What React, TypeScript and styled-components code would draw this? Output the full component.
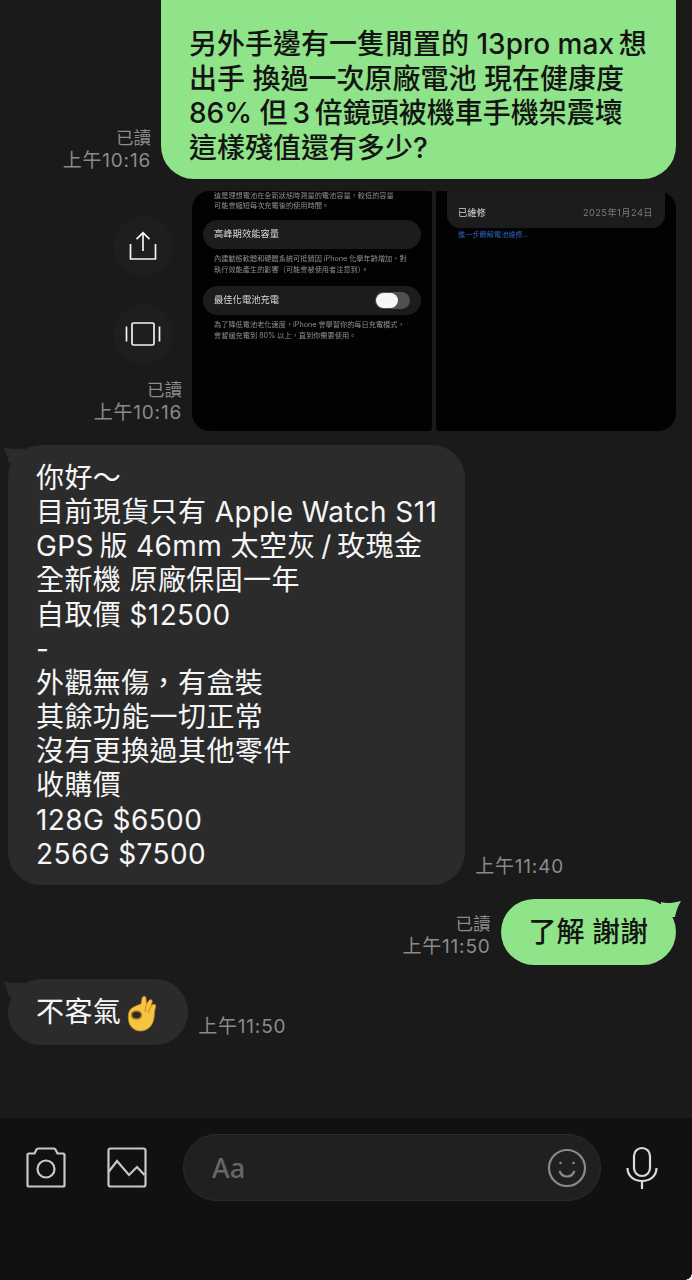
import React from "react";
import styled, { createGlobalStyle } from "styled-components";

const GlobalStyle = createGlobalStyle`
  html, body {
    margin: 0;
    padding: 0;
    background: #1a1a1a;
  }
  * {
    box-sizing: border-box;
  }
`;

const Page = styled.div`
  position: relative;
  width: 692px;
  height: 1280px;
  display: flex;
  flex-direction: column;
  overflow: hidden;
  background: #1a1a1a;
  font-family: Inter, "Noto Sans CJK TC", sans-serif;
`;

const Thread = styled.main`
  flex: 1;
  display: flex;
  flex-direction: column;
  padding: 0 16px 0 8px;
`;

const Row = styled.div<{ $mine?: boolean; $gap: number }>`
  display: flex;
  align-items: flex-end;
  justify-content: ${(p) => (p.$mine ? "flex-end" : "flex-start")};
  margin-bottom: ${(p) => p.$gap}px;
`;

const Bubble = styled.div<{ $mine?: boolean }>`
  position: relative;
  padding: 16px 28px;
  border-radius: 33px;
  background: ${(p) => (p.$mine ? "#8fe388" : "#2b2b2b")};
  color: ${(p) => (p.$mine ? "#141414" : "#f6f6f6")};
  font-size: 28px;
  font-weight: ${(p) => (p.$mine ? 500 : 400)};
  letter-spacing: ${(p) => (p.$mine ? "0" : "0.4px")};
  line-height: 34px;
  white-space: pre-line;
`;

const TopBubble = styled(Bubble)`
  width: 515px;
  height: 179px;
  padding-top: 27px;
  line-height: 34.5px;
  border-radius: 0 0 33px 33px;
`;

const LongBubble = styled(Bubble)`
  padding: 16px 28px 14px;
  line-height: 34.16px;
`;

const Tail = styled.svg<{ $mine?: boolean }>`
  position: absolute;
  top: 0;
  width: 20px;
  height: 18px;
  ${(p) => (p.$mine ? "right: -5px;" : "left: -5px;")}
`;

const Meta = styled.div<{ $left?: boolean }>`
  color: #8b8b8b;
  font-size: 19px;
  letter-spacing: 0.8px;
  line-height: 23px;
  text-align: right;
  white-space: nowrap;
  margin: ${(p) => (p.$left ? "0 0 7px 10px" : "0 10px 7px 0")};
`;

const ReadLabel = styled.span`
  display: block;
  font-size: 17.5px;
  letter-spacing: 0;
`;

const PhotoRow = styled.div`
  display: flex;
  justify-content: flex-end;
  align-items: flex-end;
  height: 240px;
  margin-bottom: 14px;
`;

const SideColumn = styled.div`
  display: flex;
  flex-direction: column;
  align-items: flex-end;
`;

const ActionList = styled.div`
  display: flex;
  flex-direction: column;
  gap: 28px;
  margin: 0 19px 14px 0;
`;

const RoundButton = styled.div`
  width: 60px;
  height: 60px;
  border-radius: 50%;
  background: #1e1e1f;
  display: flex;
  align-items: center;
  justify-content: center;
`;

const Photos = styled.div`
  display: flex;
  gap: 4px;
  width: 484px;
  height: 240px;
`;

const Photo = styled.div<{ $side: "left" | "right" }>`
  position: relative;
  flex: 1;
  overflow: hidden;
  background: #020202;
  border-radius: ${(p) => (p.$side === "left" ? "18px 3px 3px 18px" : "3px 18px 18px 3px")};
  color: #8f8f8f;
  font-size: 7.2px;
  line-height: 10.5px;
`;

const Blurred = styled.div`
  filter: blur(0.7px);
  padding: 0 11px;
`;

const Note = styled.p`
  margin: 0;
  padding: 0 11px;
  height: 21px;
  white-space: nowrap;
`;

const TopNote = styled(Note)`
  line-height: 9.5px;
`;

const SettingRow = styled.div<{ $top: number }>`
  display: flex;
  align-items: center;
  justify-content: space-between;
  height: 29px;
  margin: ${(p) => p.$top}px 0 5px;
  padding: 0 11px;
  border-radius: 15px;
  background: #1c1c1d;
  color: #d8d8d8;
  font-size: 9.3px;
`;

const Toggle = styled.div`
  width: 35px;
  height: 17px;
  padding: 1px;
  border-radius: 9px;
  background: #505051;
  &::before {
    content: "";
    display: block;
    width: 22px;
    height: 15px;
    border-radius: 8px;
    background: #f6f6f6;
  }
`;

const RepairCard = styled.div`
  display: flex;
  align-items: center;
  justify-content: space-between;
  height: 37px;
  margin: 0 11px;
  padding: 7px 12px 0 11px;
  border-radius: 0 0 13px 13px;
  background: #1c1c1d;
  color: #d8d8d8;
  font-size: 9.3px;
  filter: blur(0.7px);
`;

const RepairDate = styled.span`
  color: #7b7b7b;
  letter-spacing: 0.4px;
`;

const RepairLink = styled.div`
  margin: 2px 0 0 22px;
  color: #2f62b8;
  font-size: 7.2px;
  filter: blur(0.7px);
`;

const OkHand = styled.svg`
  display: inline-block;
  width: 32px;
  height: 37px;
  margin: -8px 2px -8px 5px;
  vertical-align: -2px;
`;

const Composer = styled.footer`
  height: 162px;
  flex-shrink: 0;
  display: flex;
  align-items: flex-start;
  padding: 16px 0 0 26px;
  background: #111112;
`;

const ToolIcon = styled.svg<{ $gap: number }>`
  width: 40px;
  height: 42px;
  margin: 12px ${(p) => p.$gap}px 0 0;
  flex-shrink: 0;
`;

const InputBox = styled.div`
  width: 418px;
  height: 67px;
  display: flex;
  align-items: center;
  justify-content: space-between;
  padding: 0 13px 0 28px;
  border: 1px solid #2b2b2c;
  border-radius: 34px;
  background: #202021;
  color: #666666;
  font-family: "Noto Sans", sans-serif;
  font-size: 27px;
  font-weight: 500;
`;

const Mic = styled.svg`
  width: 32px;
  height: 44px;
  margin: 11px 0 0 25px;
`;

const ScreenCorner = styled.div`
  position: absolute;
  right: 0;
  bottom: 0;
  width: 7px;
  height: 7px;
  background: radial-gradient(circle at 0 0, transparent 6.5px, #f0f0f0 7px);
`;

const GreenTail = () => (
  <Tail $mine viewBox="0 0 20 18">
    <path d="M0 3 C6 5 12 4 20 2 C17 7 15 12 14 18 L0 18 Z" fill="#8fe388" />
  </Tail>
);

const GreyTail = () => (
  <Tail viewBox="0 0 20 18">
    <path d="M20 3 C14 5 8 4 0 2 C3 7 5 12 6 18 L20 18 Z" fill="#2b2b2b" />
  </Tail>
);

const App: React.FC = () => {
  return (
    <Page>
      <GlobalStyle />
      <Thread>
        <Row $mine $gap={12}>
          <Meta>
            <ReadLabel>已讀</ReadLabel>
            上午10:16
          </Meta>
          <TopBubble $mine>
            {"另外手邊有一隻閒置的 13pro max\u2009想\n出手 換過一次原廠電池 現在健康度\n86% 但\u20093\u2009倍鏡頭被機車手機架震壞\n這樣殘值還有多少?"}
          </TopBubble>
        </Row>

        <PhotoRow>
          <SideColumn>
            <ActionList>
              <RoundButton>
                <svg width="30" height="30" viewBox="0 0 30 30" fill="none" stroke="#f2f2f2" strokeWidth="1.7">
                  <path d="M15 2v18M8.500 8.200 15 1.800l6.500 6.400" />
                  <path d="M2.500 13v15h25V13" />
                </svg>
              </RoundButton>
              <RoundButton>
                <svg width="36" height="26" viewBox="0 0 36 26" fill="none" stroke="#f2f2f2" strokeWidth="1.7">
                  <rect x="7" y="2" width="22" height="22" rx="1.500" />
                  <path d="M1.500 5.500v15M34.500 5.500v15" />
                </svg>
              </RoundButton>
            </ActionList>
            <Meta>
              <ReadLabel>已讀</ReadLabel>
              上午10:16
            </Meta>
          </SideColumn>
          <Photos>
            <Photo $side="left">
              <Blurred>
                <TopNote>
                  這是理想電池在全新狀態時測量的電池容量，較低的容量
                  <br />
                  可能會縮短每次充電後的使用時間。
                </TopNote>
                <SettingRow $top={8}>高峰期效能容量</SettingRow>
                <Note>
                  內建動態軟體和硬體系統可抵銷因 iPhone 化學年齡增加，對
                  <br />
                  執行效能產生的影響（可能會被使用者注意到）。
                </Note>
                <SettingRow $top={11}>
                  最佳化電池充電
                  <Toggle />
                </SettingRow>
                <Note>
                  為了降低電池老化速度，iPhone 會學習你的每日充電模式，
                  <br />
                  會暫緩充電到 80% 以上，直到你需要使用。
                </Note>
              </Blurred>
            </Photo>
            <Photo $side="right">
              <RepairCard>
                已維修
                <RepairDate>2025年1月24日</RepairDate>
              </RepairCard>
              <RepairLink>進一步瞭解電池維修…</RepairLink>
            </Photo>
          </Photos>
        </PhotoRow>

        <Row $gap={14}>
          <LongBubble>
            <GreyTail />
            {"你好～\n目前現貨只有 Apple Watch S11\nGPS\u2009版 46mm 太空灰\u2009/\u2009玫瑰金\n全新機 原廠保固一年\n自取價 $12500\n-\n外觀無傷，有盒裝\n其餘功能一切正常\n沒有更換過其他零件\n收購價\n128G $6500\n256G $7500"}
          </LongBubble>
          <Meta $left>上午11:40</Meta>
        </Row>

        <Row $mine $gap={14}>
          <Meta>
            <ReadLabel>已讀</ReadLabel>
            上午11:50
          </Meta>
          <Bubble $mine>
            <GreenTail />
            了解 謝謝
          </Bubble>
        </Row>

        <Row $gap={0}>
          <Bubble>
            <GreyTail />
            不客氣
            <OkHand viewBox="0 0 32 37">
              <path d="M15 9 16 3.500C16.500.5 20 .5 20 3.500L20.500 9 23 5.500C24.500 3.500 27 5 26 7.500L25 11 27 9.500C29 8.500 30.500 10.500 29.500 12.500 28.500 15 28.500 19 28 23 27 31 21 36 14.500 36 8 36 3 31 2.500 25 2 21 2 16 6 13 9 11 12 10 15 9Z" fill="#f6c443" stroke="#c98a1e" strokeWidth="0.7" />
              <path d="M20.500 9 19 17M25 11 22 18" stroke="#c98a1e" strokeWidth="1" fill="none" />
              <ellipse cx="10.500" cy="20" rx="5" ry="4" fill="#2b2b2b" stroke="#b9791a" strokeWidth="1.500" />
            </OkHand>
          </Bubble>
          <Meta $left>上午11:50</Meta>
        </Row>
      </Thread>

      <Composer>
        <ToolIcon $gap={41} viewBox="0 0 40 42" fill="none" stroke="#c9c9c9" strokeWidth="2.2">
          <path d="M3 7.500h5.500l2-4c.3-.7 1-1 1.800-1h15.400c.8 0 1.500.3 1.800 1l2 4H37c1 0 1.500.6 1.500 1.500v30c0 1-.6 1.500-1.500 1.500H3c-1 0-1.500-.6-1.500-1.500V9c0-.9.600-1.500 1.500-1.500z" />
          <circle cx="20" cy="23" r="8.500" />
        </ToolIcon>
        <ToolIcon $gap={36} viewBox="0 0 40 42" fill="none" stroke="#c9c9c9" strokeWidth="2.2">
          <rect x="1.500" y="2.500" width="37" height="38" rx="2" />
          <path d="M1.500 26 10 15l12 14 8-8 7.500 8" />
        </ToolIcon>
        <InputBox>
          Aa
          <svg width="40" height="40" viewBox="0 0 40 40" fill="none" stroke="#8a8a8a" strokeWidth="2.2">
            <circle cx="20" cy="20" r="18" />
            <path d="M12.500 23c1.500 4 4.500 5.500 7.500 5.500s6-1.500 7.500-5.500" />
            <circle cx="13.500" cy="15" r="1.300" fill="#8a8a8a" stroke="none" />
            <circle cx="26.500" cy="15" r="1.300" fill="#8a8a8a" stroke="none" />
          </svg>
        </InputBox>
        <Mic viewBox="0 0 32 44" fill="none" stroke="#dcdcdc" strokeWidth="2.200">
          <rect x="8" y="3" width="16" height="28" rx="8" />
          <path d="M1.500 23c0 8 6.500 13 14.500 13s14.500-5 14.500-13M16 36v8" />
        </Mic>
      </Composer>
      <ScreenCorner />
    </Page>
  );
};

export default App;
